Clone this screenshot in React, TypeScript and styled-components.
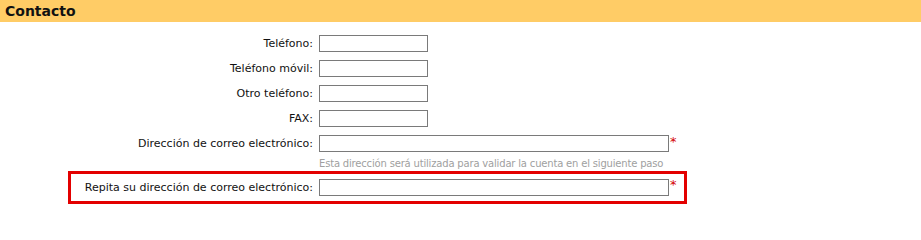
import React from "react";
import styled, { createGlobalStyle } from "styled-components";

const Global = createGlobalStyle`
  html, body { margin: 0; padding: 0; background: #fff; }
  body { font-family: "DejaVu Sans", Verdana, sans-serif; font-size: 11px; color: #000; }
`;

const Header = styled.div`
  height: 22px;
  background: #ffcc66;
  display: flex;
  align-items: center;
  padding-left: 5px;
  font-weight: bold;
  font-size: 14px;
  color: #111;
`;

const Form = styled.div`
  padding-top: 9px;
  display: flex;
  flex-direction: column;
`;

const Row = styled.div<{ $highlight?: boolean }>`
  display: flex;
  align-items: center;
  height: ${(p) => (p.$highlight ? "27px" : "25px")};
  ${(p) =>
    p.$highlight
      ? `margin-left: 68px; width: 613px; border: 3px solid #e30000;`
      : ``}
`;

const Label = styled.label<{ $width: number }>`
  width: ${(p) => p.$width}px;
  text-align: right;
  padding-right: 6px;
  box-sizing: border-box;
  white-space: nowrap;
  color: #111;
`;

const Input = styled.input<{ $wide?: boolean }>`
  box-sizing: border-box;
  width: ${(p) => (p.$wide ? "350px" : "109px")};
  height: 17px;
  border: 1px solid #7a7a7a;
  margin: 0;
  padding: 0 2px;
  font: inherit;
`;

const Req = styled.span`
  color: #d40000;
  font-size: 13px;
  align-self: flex-start;
  margin-top: 3px;
  margin-left: 1px;
`;

const Hint = styled.div`
  height: 15px;
  padding-left: 319px;
  font-size: 10px;
  letter-spacing: -0.18px;
  color: #a0a0a0;
  line-height: 15px;
  white-space: nowrap;
`;

export default function App() {
  return (
    <>
      <Global />
      <Header>Contacto</Header>
      <Form>
        <Row>
          <Label $width={319}>Teléfono:</Label>
          <Input />
        </Row>
        <Row>
          <Label $width={319}>Teléfono móvil:</Label>
          <Input />
        </Row>
        <Row>
          <Label $width={319}>Otro teléfono:</Label>
          <Input />
        </Row>
        <Row>
          <Label $width={319}>FAX:</Label>
          <Input />
        </Row>
        <Row>
          <Label $width={319}>Dirección de correo electrónico:</Label>
          <Input $wide />
          <Req>*</Req>
        </Row>
        <Hint>Esta dirección será utilizada para validar la cuenta en el siguiente paso</Hint>
        <Row $highlight>
          <Label $width={248}>Repita su dirección de correo electrónico:</Label>
          <Input $wide />
          <Req>*</Req>
        </Row>
      </Form>
    </>
  );
}
